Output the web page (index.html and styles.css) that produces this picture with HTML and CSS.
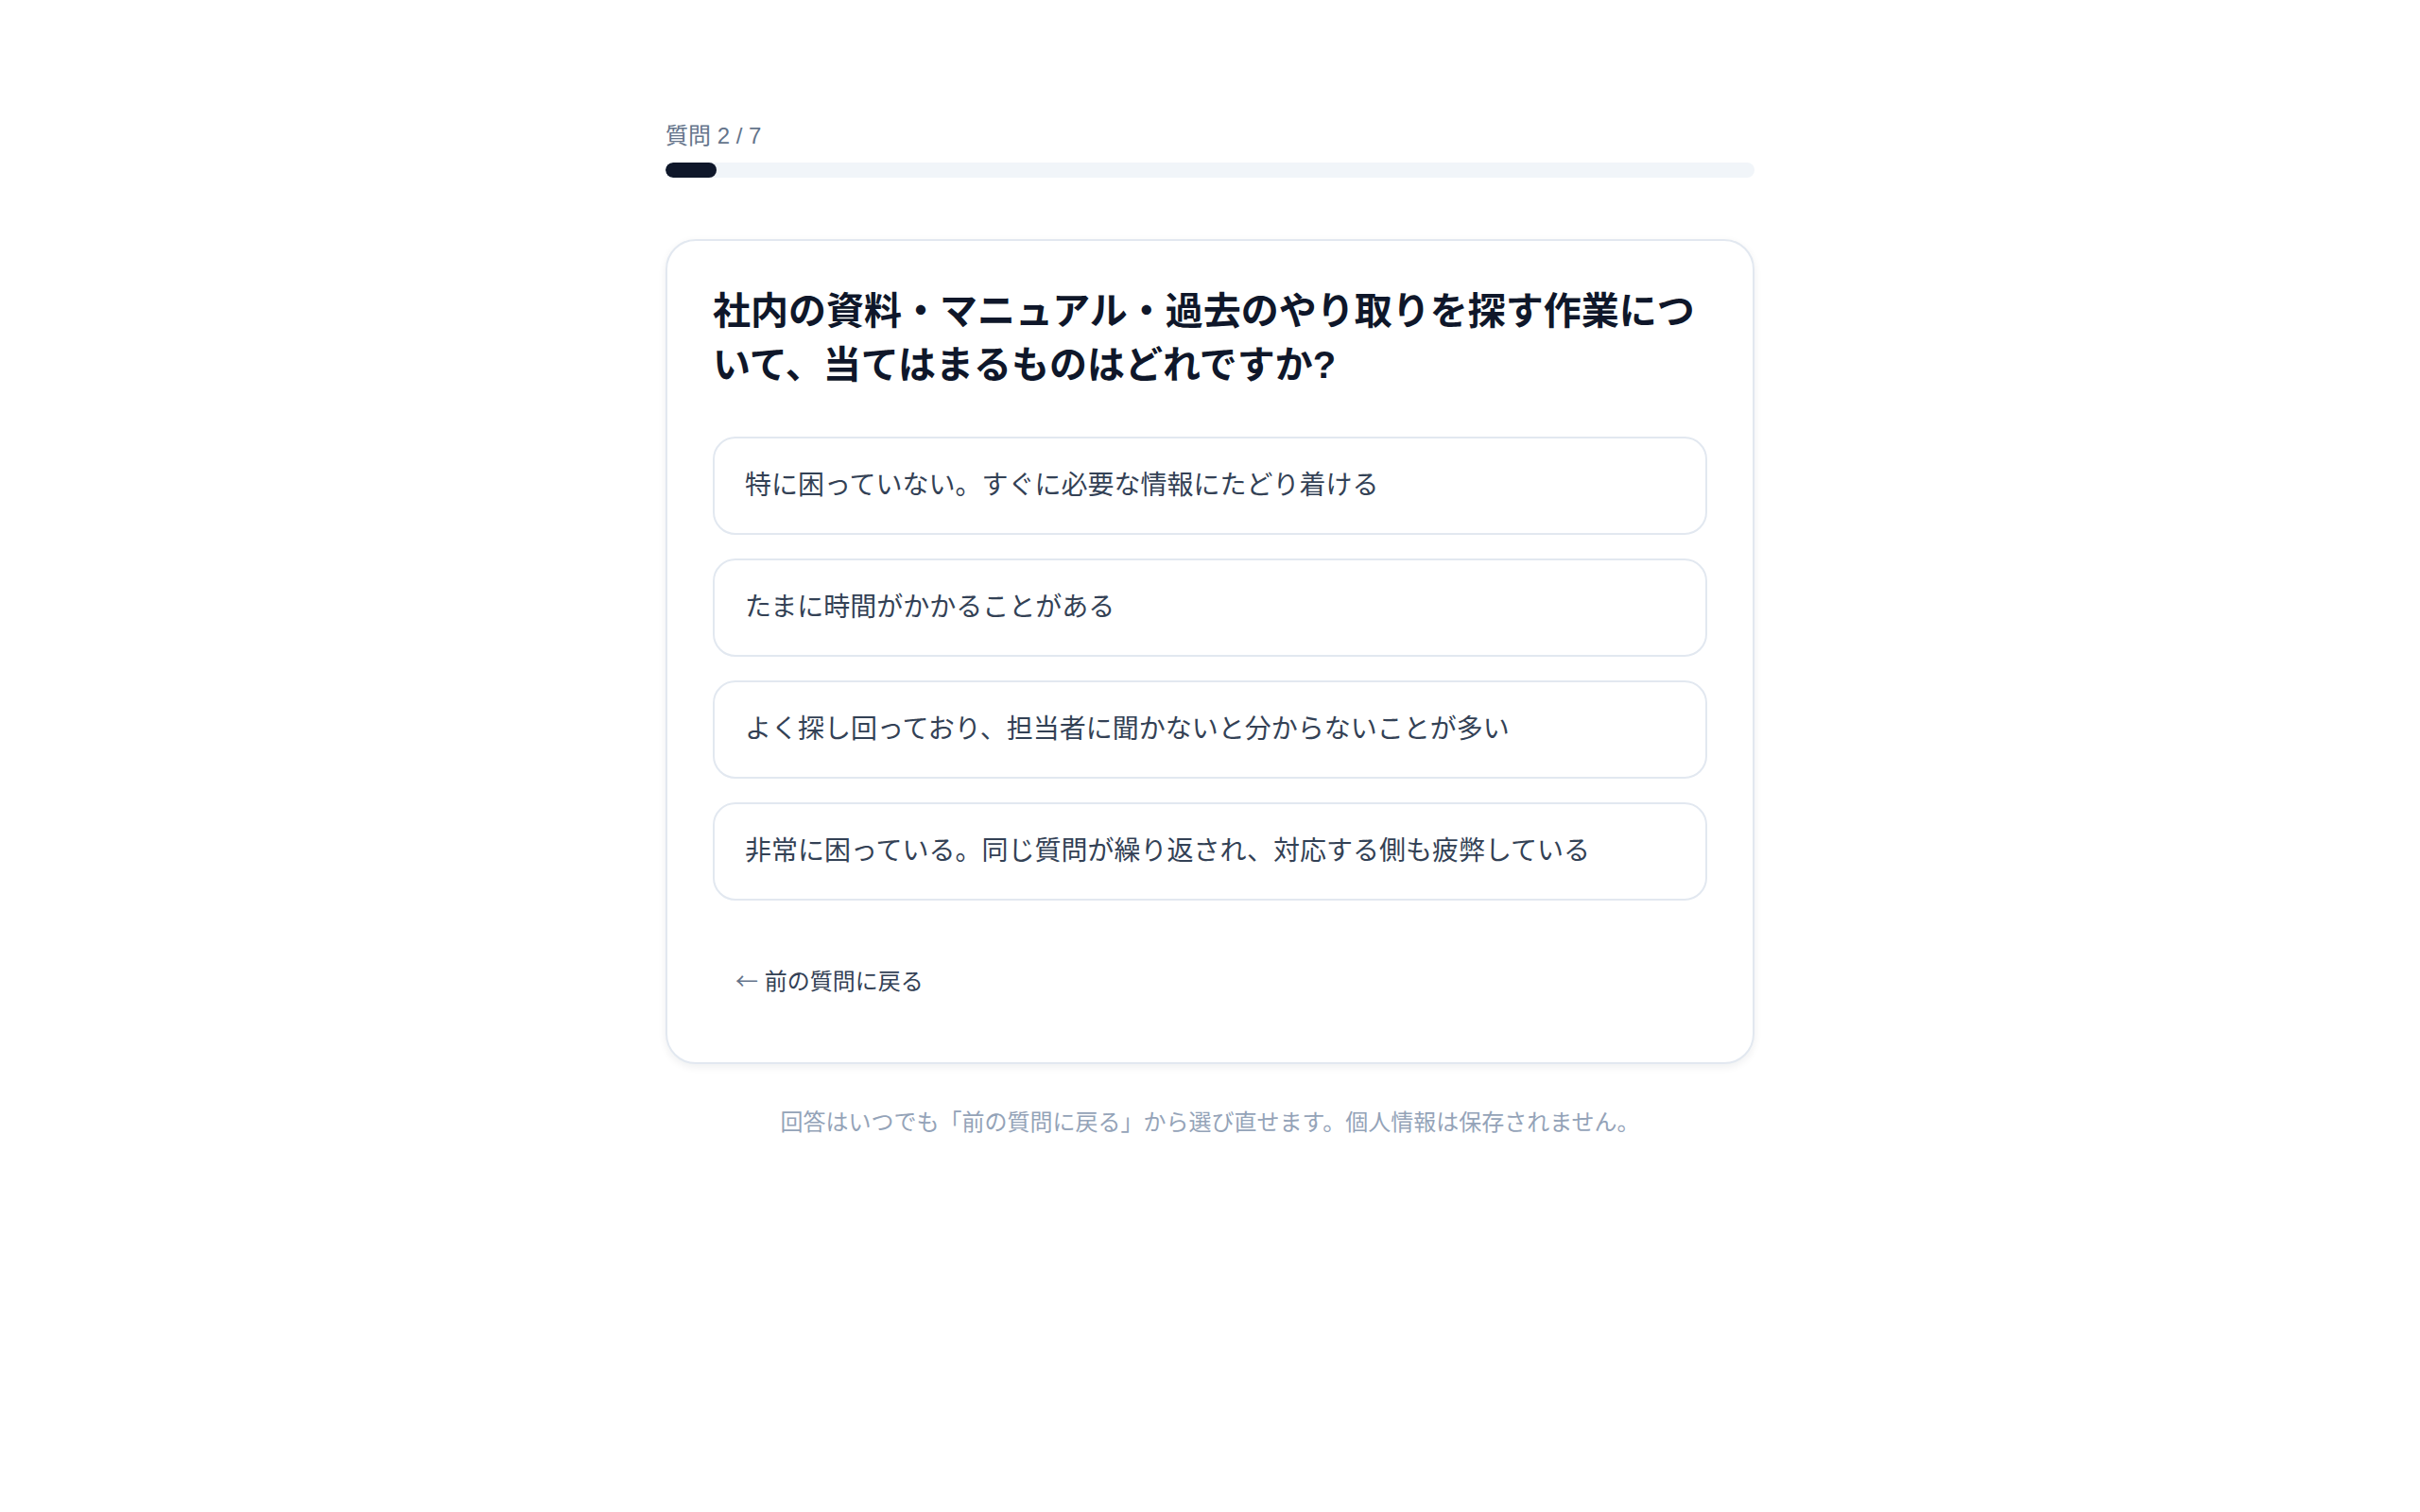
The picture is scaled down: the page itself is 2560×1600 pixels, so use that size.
FILE: index.html
```html
<!DOCTYPE html>
<html lang="ja">
<head>
<meta charset="utf-8">
<title>質問 2 / 7</title>
<link rel="stylesheet" href="styles.css">
</head>
<body>
<main class="wrap">
  <div class="progress">
    <div class="progress-label">質問 2 / 7</div>
    <div class="progress-track"><div class="progress-fill" style="width: 4.7%"></div></div>
  </div>
  <section class="card">
    <h1 class="question">社内の資料・マニュアル・過去のやり取りを探す作業について、当てはまるものはどれですか?</h1>
    <div class="options">
      <button class="option">特に困っていない。すぐに必要な情報にたどり着ける</button>
      <button class="option">たまに時間がかかることがある</button>
      <button class="option">よく探し回っており、担当者に聞かないと分からないことが多い</button>
      <button class="option">非常に困っている。同じ質問が繰り返され、対応する側も疲弊している</button>
    </div>
    <button class="back"><span class="arrow">←</span> 前の質問に戻る</button>
  </section>
  <p class="note">回答はいつでも「前の質問に戻る」から選び直せます。個人情報は保存されません。</p>
</main>
</body>
</html>
```

FILE: styles.css
```css
* { box-sizing: border-box; }
html, body {
  margin: 0;
  padding: 0;
  background: #ffffff;
}
body {
  font-family: "Liberation Sans", "Noto Sans CJK JP", sans-serif;
  color: #0f172a;
}
.wrap {
  width: 1152px;
  margin: 0 auto;
  padding-top: 126px;
}
.progress-label {
  font-size: 24px;
  line-height: 36px;
  color: #64748b;
}
.progress-track {
  margin-top: 10px;
  height: 16px;
  border-radius: 8px;
  background: #f1f5f9;
  overflow: hidden;
}
.progress-fill {
  height: 100%;
  background: #0f172a;
  border-radius: 8px;
}
.card {
  margin-top: 65px;
  border: 2px solid #e2e8f0;
  border-radius: 32px;
  background: #ffffff;
  padding: 46px 48px 49px;
  box-shadow: 0 3px 8px rgba(15, 23, 42, 0.07);
}
.question {
  margin: 0;
  font-size: 40px;
  line-height: 57px;
  font-weight: 700;
  color: #0f172a;
}
.options {
  margin-top: 47px;
  display: flex;
  flex-direction: column;
  gap: 25px;
}
.option {
  display: block;
  width: 100%;
  text-align: left;
  font-family: inherit;
  font-size: 28px;
  line-height: 40px;
  color: #334155;
  background: #ffffff;
  border: 2px solid #e2e8f0;
  border-radius: 24px;
  padding: 30px 32px;
  cursor: pointer;
}
.back {
  margin-top: 48px;
  display: inline-block;
  font-family: inherit;
  font-size: 24px;
  line-height: 36px;
  color: #334155;
  background: transparent;
  border: 0;
  padding: 18px 24px;
  cursor: pointer;
}
.arrow {
  font-family: "Noto Sans CJK JP", sans-serif;
  color: #64748b;
}
.note {
  margin: 44px 0 0;
  text-align: center;
  font-size: 24px;
  line-height: 36px;
  color: #94a3b8;
}
```
